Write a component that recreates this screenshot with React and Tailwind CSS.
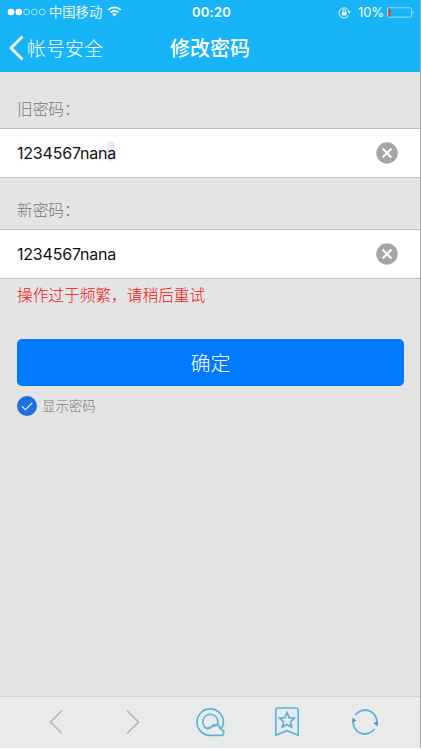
import React from "react";

function StatusBar() {
  return (
    <div className="relative flex h-6 items-center text-white">
      <svg width="39" height="9" viewBox="0 0 39 9" className="ml-[7px]">
        <circle cx="4" cy="4" r="3.3" fill="white" />
        <circle cx="11.8" cy="4" r="3.3" fill="white" />
        <circle cx="19.6" cy="4" r="2.9" fill="none" stroke="white" strokeWidth="0.6" />
        <circle cx="27.4" cy="4" r="2.9" fill="none" stroke="white" strokeWidth="0.6" />
        <circle cx="35.2" cy="4" r="2.9" fill="none" stroke="white" strokeWidth="0.6" />
      </svg>
      <span className="ml-[3px] text-[13.3px] font-[350] leading-6">中国移动</span>
      <svg width="15" height="11" viewBox="0 0 15 11" className="mb-px ml-[5px]">
        <path d="M1.2 4a9 9 0 0 1 12.6 0M3.5 6.4a5.8 5.8 0 0 1 8 0" fill="none" stroke="white" strokeWidth="1.7" />
        <path d="M7.5 10.5 5.2 8.2a3.3 3.3 0 0 1 4.6 0z" fill="white" />
      </svg>
      <span className="absolute inset-x-0 pl-[3px] text-center font-['Inter'] text-[13px] font-semibold leading-6 tracking-[0.2px]">
        00:20
      </span>
      <div className="ml-auto flex items-center">
        <svg width="13" height="13" viewBox="0 0 13 13" fill="none" stroke="white">
          <path d="M10.4 9.8A5.1 5.1 0 1 1 11.2 6" strokeWidth="0.9" />
          <path d="M9.7 5.6h3L11.2 7.9z" fill="white" stroke="none" />
          <rect x="3.8" y="5.9" width="4.8" height="3.5" fill="white" stroke="none" />
          <path d="M4.8 6V4.8a1.4 1.4 0 0 1 2.8 0V6" strokeWidth="0.9" />
        </svg>
        <span className="ml-[7px] font-['Inter'] text-[13px] leading-6 tracking-[-0.1px]">10%</span>
        <svg width="28" height="11" viewBox="0 0 28 11" className="ml-[3px] mr-[5px]">
          <rect x="0.5" y="0.8" width="24" height="9.4" rx="1.3" fill="none" stroke="white" strokeOpacity="0.75" strokeWidth="0.7" />
          <rect x="1.2" y="1.6" width="2.3" height="7.8" fill="#f3402d" />
          <path d="M25.8 3.8q1.6 1.7 0 3.4z" fill="white" />
        </svg>
      </div>
    </div>
  );
}

function PasswordField({ label, value, selected }) {
  return (
    <div>
      <div className="h-9 pl-[17px] text-[15.7px] font-light leading-[34px] text-[#777]">{label}</div>
      <div className="flex h-[50px] items-center justify-between border-y border-[#c3c3c3] bg-white pl-[17px] pr-[22px]">
        <span className="font-['Inter'] text-[16px] leading-5 tracking-[-0.2px] text-[#111]">
          {value.slice(0, -1)}
          <span className={selected ? "relative z-0 before:absolute before:-top-[2px] before:left-0 before:-z-10 before:h-5 before:w-2 before:rounded-sm before:bg-[#ececf7]" : ""}>
            {value.slice(-1)}
          </span>
        </span>
        <svg width="22" height="22" viewBox="0 0 22 22">
          <circle cx="11" cy="11" r="10.7" fill="#a5a5a5" />
          <path d="m6.6 6.6 8.8 8.8m0-8.8-8.8 8.8" stroke="white" strokeWidth="2.1" />
        </svg>
      </div>
    </div>
  );
}

function Toolbar() {
  return (
    <div className="flex h-[52px] items-center border-t border-[#d6d6d6] bg-[#e9eaeb] pb-px pl-[48px]">
      <svg width="16" height="26" viewBox="0 0 16 26" fill="none" stroke="#b5b5b5" strokeWidth="1.6">
        <path d="M14 1.5 2.5 13 14 24.5" />
      </svg>
      <svg width="16" height="26" viewBox="0 0 16 26" fill="none" stroke="#b5b5b5" strokeWidth="1.6" className="ml-[61px]">
        <path d="M2 1.5 13.5 13 2 24.5" />
      </svg>
      <svg width="30" height="30" viewBox="0 0 30 30" fill="none" stroke="#5db5d5" strokeWidth="1.7" strokeLinejoin="round" className="ml-[54px]">
        <path d="M15 28.3A13.2 13.2 0 1 1 28.4 15C28.4 18.2 27.3 20.5 25.7 21.8L28.6 24.2V26.5Q28.6 28.3 26.8 28.3Z" />
        <path d="M11.7 21.5A7.5 7.5 0 1 1 22.8 15V17.4L25.7 21.8M22.8 17.4C21 19.2 19.4 18.8 18.4 17.6C16.7 20.6 14.8 21.9 11.7 21.5Z" />
      </svg>
      <svg width="26" height="30" viewBox="0 0 26 30" fill="none" stroke="#5db5d5" strokeWidth="1.7" strokeLinejoin="round" className="ml-[49px]">
        <path d="M3.8 1h18.4q2 0 2 2v25.2L13 23.6 1.8 28.2V3q0-2 2-2z" />
        <path d="m13 5.7 2.2 4.9 5.3.6-4 3.6 1.1 5.2-4.6-2.6L8.4 20l1.1-5.2-4-3.6 5.3-.6z" strokeLinejoin="miter" />
      </svg>
      <svg width="28" height="28" viewBox="0 0 28 28" fill="none" stroke="#5db5d5" strokeWidth="1.8" className="ml-[51px]">
        <path d="M4.5 7A11.8 11.8 0 0 1 25.8 15.5" />
        <path d="M23.5 21A11.8 11.8 0 0 1 2.2 12.5" />
        <path d="m22.4 15 4.3-2v5.5zM5.4 12.2l-4-2.5v5z" fill="#409dbe" stroke="none" />
      </svg>
    </div>
  );
}

function App() {
  return (
    <div className="h-[750px] w-full overflow-hidden bg-white font-['Noto_Sans_CJK_SC',sans-serif]">
      <div className="flex h-[748px] flex-col border-r border-[#aaa] bg-[#e4e4e4]">
        <header className="h-[72px] shrink-0 bg-[#17b5f8]">
          <StatusBar />
          <div className="relative flex h-12 items-center text-white">
            <svg width="15" height="26" viewBox="0 0 15 26" fill="none" stroke="white" strokeWidth="2.8" className="ml-[9px]">
              <path d="M13.5 1.5 2 13l11.5 11.5" />
            </svg>
            <span className="ml-[3px] text-[19px] font-light leading-[46px]">帐号安全</span>
            <h1 className="absolute inset-x-0 text-center text-[20px] font-medium leading-[46px]">修改密码</h1>
          </div>
        </header>

        <main className="flex-1 pt-5">
          <PasswordField label="旧密码：" value="1234567nana" selected />
          <div className="pt-[15px]">
            <PasswordField label="新密码：" value="1234567nana" />
          </div>
          <p className="pl-[17px] text-[15.7px] font-light leading-[31px] text-[#f01010]">操作过于频繁，请稍后重试</p>
          <button className="mx-[17px] mt-[29px] block h-[47px] w-[387px] rounded-[5px] bg-[#007aff] text-[20px] font-light leading-[46px] text-white">
            确定
          </button>
          <label className="mt-[10px] flex h-5 items-center pl-[17px]">
            <svg width="20" height="20" viewBox="0 0 20 20">
              <circle cx="10" cy="10" r="10" fill="#1e70df" />
              <path d="m5 10.3 3.4 3.5 6.8-7" fill="none" stroke="white" strokeWidth="1.1" />
            </svg>
            <span className="mb-0.5 ml-[5px] text-[13.4px] font-light leading-[18px] text-[#777]">显示密码</span>
          </label>
        </main>

        <Toolbar />
      </div>
    </div>
  );
}

export default App;
